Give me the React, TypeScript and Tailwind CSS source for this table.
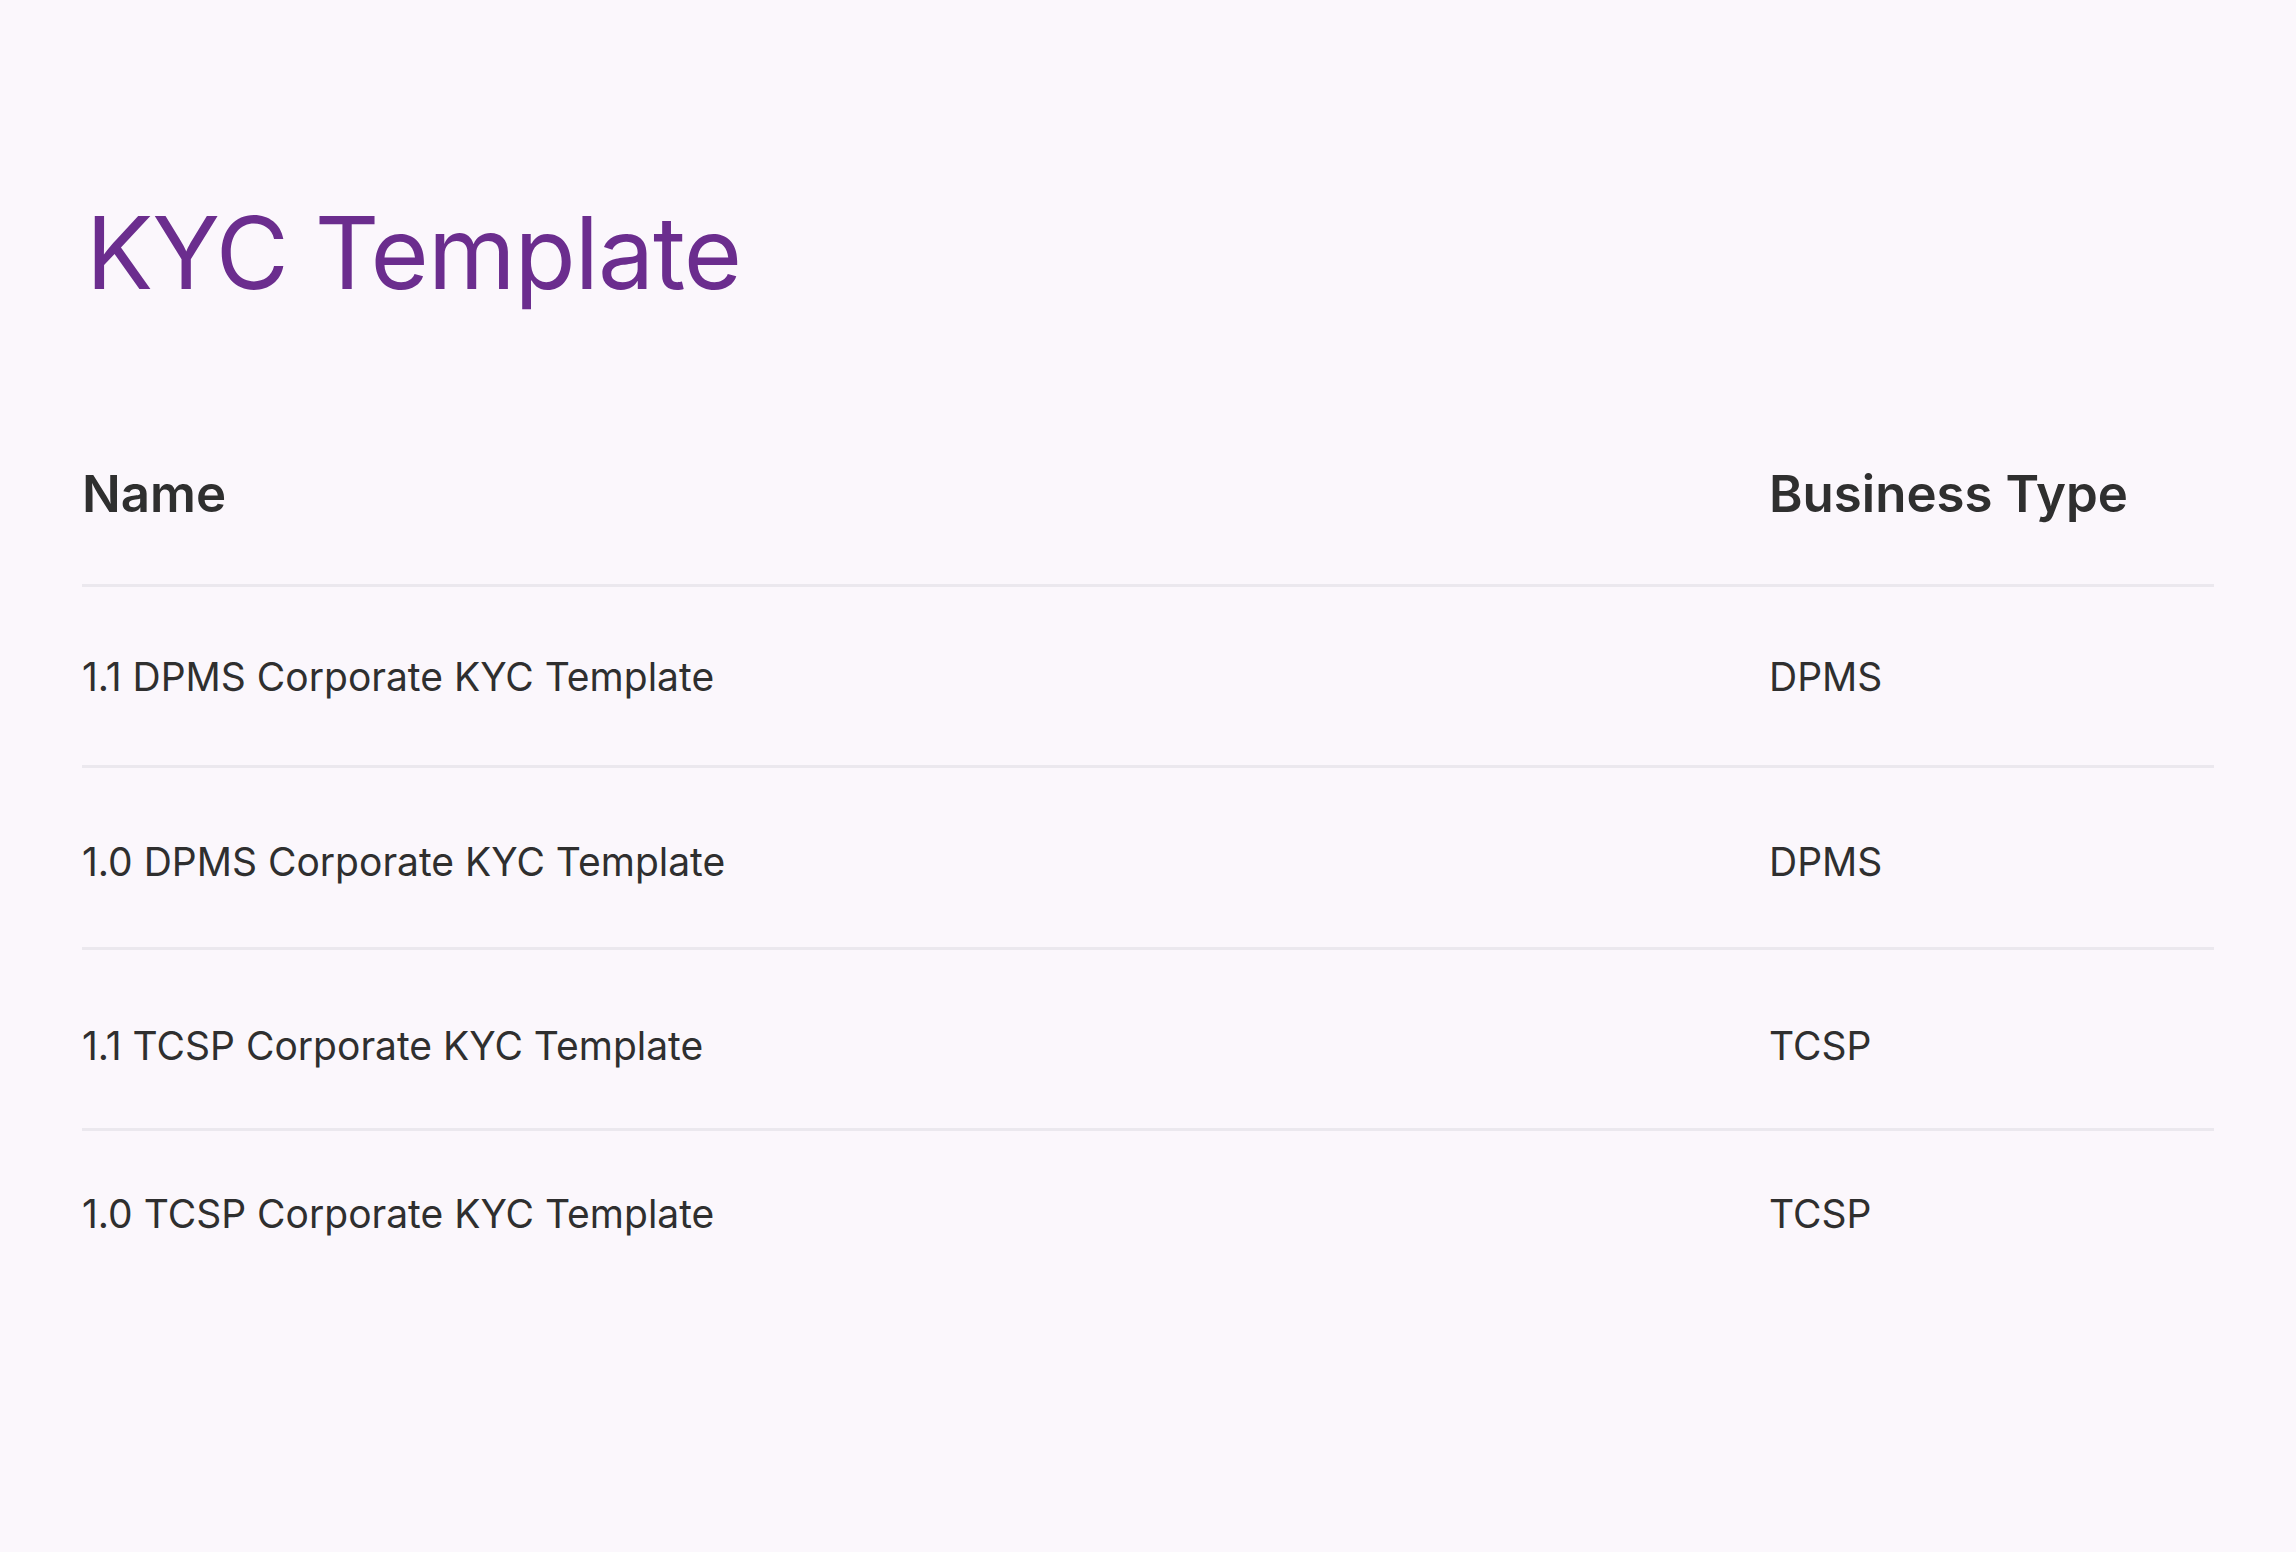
import React from "react";

const rows = [
  { name: "1.1 DPMS Corporate KYC Template", type: "DPMS", cls: "grid h-[181px] grid-cols-[1687px_1fr] items-start pt-[70px] border-b-[3px] border-[#ebe8ee]" },
  { name: "1.0 DPMS Corporate KYC Template", type: "DPMS", cls: "grid h-[182px] grid-cols-[1687px_1fr] items-start pt-[74px] border-b-[3px] border-[#ebe8ee]" },
  { name: "1.1 TCSP Corporate KYC Template", type: "TCSP", cls: "grid h-[181px] grid-cols-[1687px_1fr] items-start pt-[76px] border-b-[3px] border-[#ebe8ee]" },
  { name: "1.0 TCSP Corporate KYC Template", type: "TCSP", cls: "grid h-[181px] grid-cols-[1687px_1fr] items-start pt-[63px]" },
];

export default function App() {
  return (
    <div
      className="min-h-[1552px] w-full bg-[#fbf7fc] px-[82px] pt-[203px] text-[#2f2f2f]"
      style={{ fontFamily: "Inter, 'Noto Sans', sans-serif" }}
    >
      <h1 className="ml-[4px] text-[100px] leading-none font-normal tracking-[-1px] text-[#6b2d8e]">
        KYC Template
      </h1>
      <div className="mt-[100px]">
        <div className="grid h-[184px] grid-cols-[1687px_1fr] items-center border-b-[3px] border-[#ebe8ee]">
          <div className="text-[51px] font-semibold leading-none">Name</div>
          <div className="text-[51px] font-semibold leading-none">Business Type</div>
        </div>
        {rows.map((r, i) => (
          <div key={i} className={r.cls}>
            <div className="text-[39px] leading-none">{r.name}</div>
            <div className="text-[39px] leading-none">{r.type}</div>
          </div>
        ))}
      </div>
    </div>
  );
}
